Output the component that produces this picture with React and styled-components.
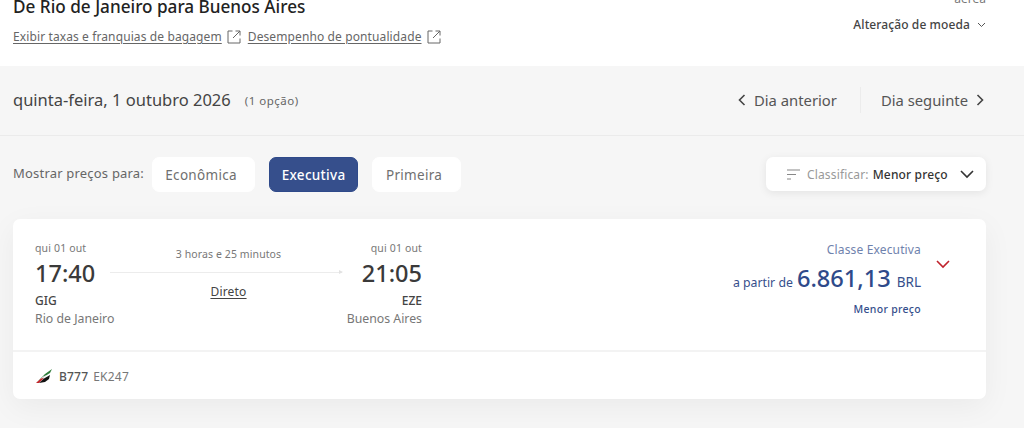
import React from "react"
import styled, { createGlobalStyle } from "styled-components"

const GlobalStyle = createGlobalStyle`
  html, body {
    margin: 0;
    height: 428px;
    overflow: hidden;
    background: #f6f6f6;
    font-family: "Noto Sans", "Open Sans", sans-serif;
    color: #333;
  }
`

const Header = styled.header`
  height: 66px;
  background: #fff;
  padding: 0 38px 0 13px;
  box-sizing: border-box;
  display: flex;
  justify-content: space-between;
  overflow: hidden;
`

const Title = styled.h1`
  margin: -5px 0 0;
  font-size: 17.15px;
  line-height: 24px;
  font-weight: 500;
  color: #222;
`

const LinkRow = styled.div`
  display: flex;
  gap: 7px;
  margin-top: 10px;
`

const TextLink = styled.a`
  display: flex;
  align-items: center;
  gap: 5px;
  font-size: 12px;
  line-height: 16px;
  letter-spacing: 0.11px;
  color: #666;
  span {
    text-decoration: underline;
    text-underline-offset: 2px;
  }
`

const HeaderRight = styled.div`
  display: flex;
  flex-direction: column;
  align-items: flex-end;
`

const Cutoff = styled.div`
  margin-top: -9px;
  font-size: 12px;
  line-height: 16px;
  color: #777;
`

const CurrencyButton = styled.div`
  display: flex;
  align-items: center;
  gap: 7px;
  margin-top: 10px;
  font-size: 12px;
  line-height: 16px;
  font-weight: 500;
  letter-spacing: 0.1px;
  color: #444;
`

const DateBar = styled.section`
  height: 70px;
  box-sizing: border-box;
  border-bottom: 1px solid #ebebeb;
  padding: 0 40px 2px 13px;
  display: flex;
  align-items: center;
  justify-content: space-between;
`

const DateInfo = styled.div`
  display: flex;
  align-items: baseline;
  gap: 14px;
`

const DateText = styled.span`
  font-size: 16.5px;
  color: #444;
`

const Options = styled.span`
  font-size: 11.5px;
  letter-spacing: 0.5px;
  color: #666;
  position: relative;
  top: -1px;
`

const DayNav = styled.nav`
  display: flex;
  align-items: center;
`

const DayLink = styled.div`
  display: flex;
  align-items: center;
  gap: 8px;
  font-size: 14.8px;
  color: #555;
`

const NavDivider = styled.div`
  width: 1px;
  height: 26px;
  background: #ececec;
  margin: 0 20px 0 23px;
`

const FilterBar = styled.section`
  display: flex;
  align-items: flex-start;
  justify-content: space-between;
  padding: 21px 38px 0 13px;
`

const ClassGroup = styled.div`
  display: flex;
  align-items: center;
`

const ShowLabel = styled.span`
  font-size: 13px;
  letter-spacing: 0.2px;
  color: #666;
  margin-right: 8px;
  padding-bottom: 3px;
`

const ClassButton = styled.div`
  height: 35px;
  box-sizing: border-box;
  width: ${p => p.$w}px;
  margin-right: 14px;
  padding-right: ${p => (p.$active ? 0 : 5)}px;
  display: flex;
  align-items: center;
  justify-content: center;
  border-radius: 7px;
  border: 1px solid ${p => (p.$active ? "#2f4a8a" : "#fff")};
  font-size: 13.5px;
  letter-spacing: 0.3px;
  background: ${p => (p.$active ? "#364f8c" : "#fff")};
  color: ${p => (p.$active ? "#fff" : "#707070")};
  font-weight: ${p => (p.$active ? 500 : 400)};
`

const SortBox = styled.div`
  width: 220px;
  height: 34px;
  box-sizing: border-box;
  background: #fff;
  border-radius: 7px;
  box-shadow: 0 2px 8px rgba(0, 0, 0, 0.08);
  padding: 0 12px 0 21px;
  display: flex;
  align-items: center;
  font-size: 12px;
  letter-spacing: 0.15px;
`

const SortLabel = styled.span`
  color: #999;
  margin: 0 4px 0 6px;
`

const SortValue = styled.span`
  font-weight: 500;
  color: #333;
  flex: 1;
`

const Card = styled.article`
  margin: 27px 38px 0 13px;
  height: 180px;
  background: #fff;
  border-radius: 7px;
  box-shadow: 0 8px 30px rgba(0, 0, 0, 0.05);
  display: flex;
  flex-direction: column;
`

const CardMain = styled.div`
  height: 133px;
  box-sizing: border-box;
  border-bottom: 2px solid #f3f3f3;
  padding: 22px 35px 0 22px;
  display: flex;
  justify-content: space-between;
`

const Route = styled.div`
  display: flex;
  width: 387px;
`

const Stop = styled.div`
  width: 60px;
  white-space: nowrap;
  display: flex;
  flex-direction: column;
  align-items: ${p => (p.$end ? "flex-end" : "flex-start")};
  flex: none;
`

const StopDate = styled.div`
  font-size: 10.5px;
  line-height: 14px;
  letter-spacing: 0.15px;
  color: #777;
`

const StopTime = styled.div`
  font-size: 23.5px;
  line-height: 33px;
  margin-top: 2px;
  font-weight: 500;
  color: #3a3a3a;
`

const StopCode = styled.div`
  font-size: 12px;
  line-height: 17px;
  margin-top: 2px;
  font-weight: 500;
  color: #444;
`

const StopCity = styled.div`
  font-size: 12.3px;
  line-height: 18px;
  margin-top: 1px;
  color: #777;
`

const Middle = styled.div`
  flex: 1;
  display: flex;
  flex-direction: column;
  align-items: center;
  padding-top: 6px;
`

const Duration = styled.div`
  font-size: 10.5px;
  line-height: 14px;
  letter-spacing: 0.1px;
  color: #777;
`

const FlightLine = styled.div`
  position: relative;
  align-self: stretch;
  height: 1px;
  background: #ececec;
  margin: 11px 20px 0 15px;
  &::after {
    content: "";
    position: absolute;
    right: -1px;
    top: -2px;
    border-left: 4px solid #e2e2e2;
    border-top: 2.5px solid transparent;
    border-bottom: 2.5px solid transparent;
  }
`

const StopsLink = styled.a`
  margin-top: 11px;
  font-size: 12px;
  line-height: 16px;
  letter-spacing: 0.2px;
  color: #444;
  text-decoration: underline;
  text-underline-offset: 2px;
`

const FareArea = styled.div`
  display: flex;
  gap: 15px;
`

const Fare = styled.div`
  display: flex;
  flex-direction: column;
  align-items: flex-end;
  color: #364f8c;
`

const FareClass = styled.div`
  font-size: 12px;
  line-height: 17px;
  letter-spacing: 0.15px;
  color: #6f82ad;
`

const FareLine = styled.div`
  display: flex;
  align-items: baseline;
  gap: 4px;
  font-size: 12.3px;
  line-height: 32px;
  margin-top: 4px;
`

const Price = styled.span`
  font-size: 23.6px;
  font-weight: 500;
  color: #2f4a8a;
`

const Currency = styled.span`
  font-size: 13.5px;
  margin-left: 2px;
`

const FareNote = styled.div`
  font-size: 10.5px;
  line-height: 14px;
  margin-top: 3px;
  font-weight: 500;
  letter-spacing: 0.3px;
`

const Toggle = styled.div`
  margin-top: 19px;
  line-height: 0;
`

const CardFooter = styled.div`
  flex: 1;
  display: flex;
  align-items: center;
  gap: 7px;
  padding: 1px 0 0 23px;
  font-size: 12px;
  letter-spacing: 0.2px;
`

const Aircraft = styled.span`
  font-weight: 500;
  color: #555;
`

const FlightNo = styled.span`
  color: #777;
  margin-left: -2px;
`

const ExternalIcon = () => (
  <svg width="14" height="14" viewBox="0 0 14 14" fill="none" stroke="#666" strokeWidth="1">
    <path d="M5.5 1H1v12h12V8.5M6 8l7-7M8.5 1H13v4.5" />
  </svg>
)

const Chevron = ({ d, w, h, color, sw }) => (
  <svg width={w} height={h} viewBox={`0 0 ${w} ${h}`} fill="none" stroke={color} strokeWidth={sw}>
    <path d={d} />
  </svg>
)

const SortIcon = () => (
  <svg width="14" height="11" viewBox="0 0 14 11" fill="none" stroke="#888" strokeWidth="1.1">
    <path d="M0 1h13M0 5.5h9M0 10h4" />
  </svg>
)

const Tail = () => (
  <svg width="16" height="14" viewBox="0 0 16 14">
    <path d="M0 14 L9 5 L16 0 L14 4 L6 9 Z" fill="#2f7d3b" />
    <path d="M0 14 L7 7.5 L11 6 L4 12 Z" fill="#d9d9d9" />
    <path d="M0 14 L5 9.5 L8 9 L3 14 Z" fill="#c8252c" />
    <path d="M3 14 L8 9.5 L14 6 L13 10 L9 13 Z" fill="#111" />
  </svg>
)

const App = () => (
  <>
    <GlobalStyle />
    <Header>
      <div>
        <Title>De Rio de Janeiro para Buenos Aires</Title>
        <LinkRow>
          <TextLink>
            <span>Exibir taxas e franquias de bagagem</span>
            <ExternalIcon />
          </TextLink>
          <TextLink>
            <span>Desempenho de pontualidade</span>
            <ExternalIcon />
          </TextLink>
        </LinkRow>
      </div>
      <HeaderRight>
        <Cutoff>aérea</Cutoff>
        <CurrencyButton>
          Alteração de moeda
          <Chevron d="M1 1l3.5 3.5L8 1" w={9} h={6} color="#555" sw={1} />
        </CurrencyButton>
      </HeaderRight>
    </Header>

    <DateBar>
      <DateInfo>
        <DateText>quinta-feira, 1 outubro 2026</DateText>
        <Options>(1 opção)</Options>
      </DateInfo>
      <DayNav>
        <DayLink>
          <Chevron d="M6.5 1L1.5 6l5 5" w={8} h={12} color="#444" sw={1.6} />
          Dia anterior
        </DayLink>
        <NavDivider />
        <DayLink>
          Dia seguinte
          <Chevron d="M1.5 1l5 5-5 5" w={8} h={12} color="#444" sw={1.6} />
        </DayLink>
      </DayNav>
    </DateBar>

    <FilterBar>
      <ClassGroup>
        <ShowLabel>Mostrar preços para:</ShowLabel>
        <ClassButton $w={103}>Econômica</ClassButton>
        <ClassButton $w={89} $active>Executiva</ClassButton>
        <ClassButton $w={89}>Primeira</ClassButton>
      </ClassGroup>
      <SortBox>
        <SortIcon />
        <SortLabel>Classificar:</SortLabel>
        <SortValue>Menor preço</SortValue>
        <Chevron d="M1 1l6 6 6-6" w={14} h={9} color="#333" sw={1.6} />
      </SortBox>
    </FilterBar>

    <Card>
      <CardMain>
        <Route>
          <Stop>
            <StopDate>qui 01 out</StopDate>
            <StopTime>17:40</StopTime>
            <StopCode>GIG</StopCode>
            <StopCity>Rio de Janeiro</StopCity>
          </Stop>
          <Middle>
            <Duration>3 horas e 25 minutos</Duration>
            <FlightLine />
            <StopsLink>Direto</StopsLink>
          </Middle>
          <Stop $end>
            <StopDate>qui 01 out</StopDate>
            <StopTime>21:05</StopTime>
            <StopCode>EZE</StopCode>
            <StopCity>Buenos Aires</StopCity>
          </Stop>
        </Route>
        <FareArea>
          <Fare>
            <FareClass>Classe Executiva</FareClass>
            <FareLine>
              a partir de <Price>6.861,13</Price> <Currency>BRL</Currency>
            </FareLine>
            <FareNote>Menor preço</FareNote>
          </Fare>
          <Toggle>
            <Chevron d="M1 1l6 6 6-6" w={15} h={9} color="#c0232c" sw={1.6} />
          </Toggle>
        </FareArea>
      </CardMain>
      <CardFooter>
        <Tail />
        <Aircraft>B777</Aircraft>
        <FlightNo>EK247</FlightNo>
      </CardFooter>
    </Card>
  </>
)

export default App
